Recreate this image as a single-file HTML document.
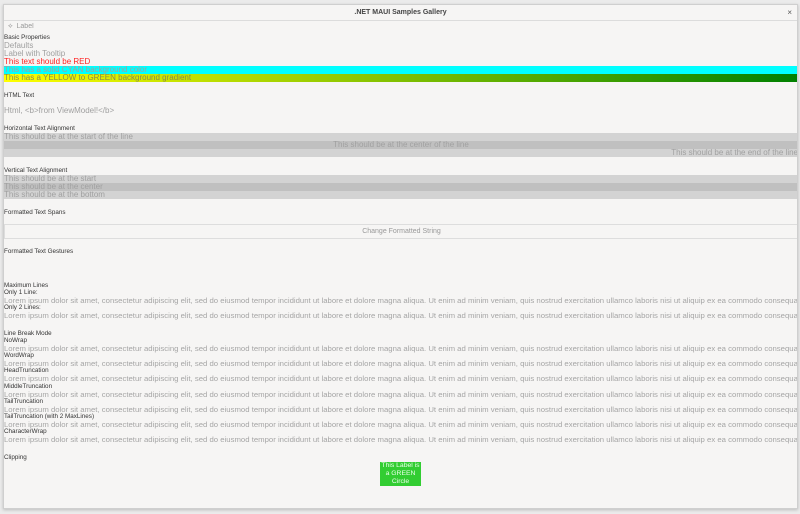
<!DOCTYPE html>
<html><head><meta charset="utf-8"><style>
*{margin:0;padding:0;box-sizing:border-box}
body{width:800px;height:514px;background:#ebebeb;position:relative;overflow:hidden;font-family:"Liberation Sans","DejaVu Sans",sans-serif}
#win{position:absolute;left:3px;top:4px;width:795px;height:505px;background:#f6f5f4;border:1px solid #cfcfcf;box-shadow:0 1px 3px rgba(0,0,0,.2);overflow:hidden}
#tb{position:absolute;left:0;top:0;width:100%;height:16px;border-bottom:1px solid #dcdcdc;text-align:center;font-size:7px;font-weight:bold;color:#444;line-height:15px}
#x{position:absolute;right:5px;top:0;font-size:8px;color:#555;font-weight:normal}
.a{position:absolute;left:0;white-space:nowrap;overflow:hidden;width:794px}
.h{font-size:6.3px;color:#333;height:8px;line-height:8px}
.g{font-size:8px;color:#a0a0a0;height:8px;line-height:8px}
.lr{font-size:7.75px;color:#a5a5a5;height:8px;line-height:8px}
</style></head><body>
<div id="win">
<div id="tb">.NET MAUI Samples Gallery<span id="x">×</span></div>
<div class="a g" style="top:18px;left:4px;font-size:7px;color:#999">⟡&nbsp; Label</div>
<div class="a h" style="top:29px">Basic Properties</div>
<div class="a g" style="top:37px">Defaults</div>
<div class="a g" style="top:45px">Label with Tooltip</div>
<div class="a g" style="top:53px;color:#f22">This text should be RED</div>
<div class="a g" style="top:61px;background:#0ff">This has a solid CYAN background color</div>
<div class="a g" style="top:69px;background:linear-gradient(90deg,#ff0,#008000);color:#8a8a4a">This has a YELLOW to GREEN background gradient</div>
<div class="a h" style="top:87px">HTML Text</div>
<div class="a g" style="top:102px">Html, &lt;b&gt;from ViewModel!&lt;/b&gt;</div>
<div class="a h" style="top:120px">Horizontal Text Alignment</div>
<div class="a g" style="top:128px;background:#d3d3d3">This should be at the start of the line</div>
<div class="a g" style="top:136px;background:#c0c0c0;text-align:center">This should be at the center of the line</div>
<div class="a g" style="top:144px;background:#d3d3d3;text-align:right">This should be at the end of the line</div>
<div class="a h" style="top:162px">Vertical Text Alignment</div>
<div class="a g" style="top:170px;background:#d3d3d3">This should be at the start</div>
<div class="a g" style="top:178px;background:#c0c0c0">This should be at the center</div>
<div class="a g" style="top:186px;background:#d3d3d3">This should be at the bottom</div>
<div class="a h" style="top:204px">Formatted Text Spans</div>
<div class="a" style="top:219px;height:15px;border-top:1px solid #ddd;border-bottom:1px solid #ddd;border-left:1px solid #ddd;font-size:7px;color:#999;text-align:center;line-height:13px">Change Formatted String</div>
<div class="a h" style="top:243px">Formatted Text Gestures</div>
<div class="a h" style="top:277px">Maximum Lines</div>
<div class="a h" style="top:284px">Only 1 Line:</div>
<div class="a lr" style="top:292px">Lorem ipsum dolor sit amet, consectetur adipiscing elit, sed do eiusmod tempor incididunt ut labore et dolore magna aliqua. Ut enim ad minim veniam, quis nostrud exercitation ullamco laboris nisi ut aliquip ex ea commodo consequat.</div>
<div class="a h" style="top:299px">Only 2 Lines:</div>
<div class="a lr" style="top:307px">Lorem ipsum dolor sit amet, consectetur adipiscing elit, sed do eiusmod tempor incididunt ut labore et dolore magna aliqua. Ut enim ad minim veniam, quis nostrud exercitation ullamco laboris nisi ut aliquip ex ea commodo consequat.</div>
<div class="a h" style="top:325px">Line Break Mode</div>
<div class="a h" style="top:332px">NoWrap</div>
<div class="a lr" style="top:340px">Lorem ipsum dolor sit amet, consectetur adipiscing elit, sed do eiusmod tempor incididunt ut labore et dolore magna aliqua. Ut enim ad minim veniam, quis nostrud exercitation ullamco laboris nisi ut aliquip ex ea commodo consequat.</div>
<div class="a h" style="top:347px">WordWrap</div>
<div class="a lr" style="top:355px">Lorem ipsum dolor sit amet, consectetur adipiscing elit, sed do eiusmod tempor incididunt ut labore et dolore magna aliqua. Ut enim ad minim veniam, quis nostrud exercitation ullamco laboris nisi ut aliquip ex ea commodo consequat.</div>
<div class="a h" style="top:362px">HeadTruncation</div>
<div class="a lr" style="top:370px">Lorem ipsum dolor sit amet, consectetur adipiscing elit, sed do eiusmod tempor incididunt ut labore et dolore magna aliqua. Ut enim ad minim veniam, quis nostrud exercitation ullamco laboris nisi ut aliquip ex ea commodo consequat.</div>
<div class="a h" style="top:378px">MiddleTruncation</div>
<div class="a lr" style="top:386px">Lorem ipsum dolor sit amet, consectetur adipiscing elit, sed do eiusmod tempor incididunt ut labore et dolore magna aliqua. Ut enim ad minim veniam, quis nostrud exercitation ullamco laboris nisi ut aliquip ex ea commodo consequat.</div>
<div class="a h" style="top:393px">TailTruncation</div>
<div class="a lr" style="top:401px">Lorem ipsum dolor sit amet, consectetur adipiscing elit, sed do eiusmod tempor incididunt ut labore et dolore magna aliqua. Ut enim ad minim veniam, quis nostrud exercitation ullamco laboris nisi ut aliquip ex ea commodo consequat.</div>
<div class="a h" style="top:408px">TailTruncation (with 2 MaxLines)</div>
<div class="a lr" style="top:416px">Lorem ipsum dolor sit amet, consectetur adipiscing elit, sed do eiusmod tempor incididunt ut labore et dolore magna aliqua. Ut enim ad minim veniam, quis nostrud exercitation ullamco laboris nisi ut aliquip ex ea commodo consequat.</div>
<div class="a h" style="top:423px">CharacterWrap</div>
<div class="a lr" style="top:431px">Lorem ipsum dolor sit amet, consectetur adipiscing elit, sed do eiusmod tempor incididunt ut labore et dolore magna aliqua. Ut enim ad minim veniam, quis nostrud exercitation ullamco laboris nisi ut aliquip ex ea commodo consequat.</div>
<div class="a h" style="top:449px">Clipping</div>
<div style="position:absolute;left:376px;top:457px;width:41px;height:24px;background:#32cd32;color:#eaffea;font-size:6.8px;line-height:8px;text-align:center;overflow:hidden">This Label is a GREEN Circle</div>
</div>
</body></html>
